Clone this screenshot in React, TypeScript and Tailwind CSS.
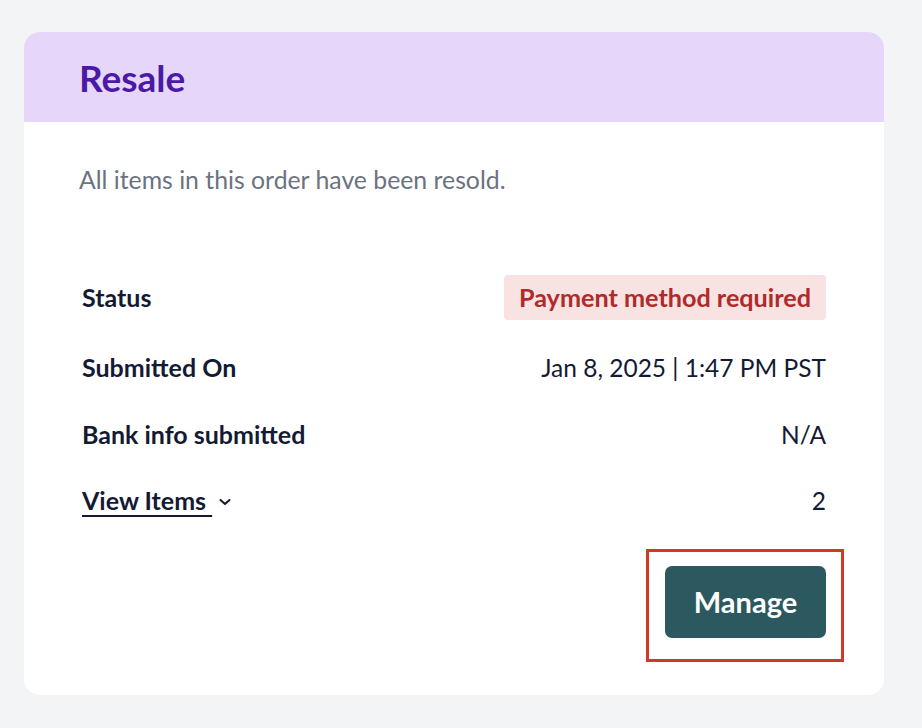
import React from "react";

export default function App() {
  return (
    <div
      className="min-h-[728px] w-full bg-[#f3f4f6] pl-[24px] pr-[38px] pt-[32px] pb-[33px]"
      style={{ fontFamily: "Lato, 'Noto Sans', sans-serif" }}
    >
      <div className="w-[860px] rounded-[16px] bg-white overflow-hidden">
        <div className="h-[90px] bg-[#e6d6fa] pl-[55px] flex items-center">
          <h1 className="text-[37px] font-bold text-[#4a1aa6] leading-none">Resale</h1>
        </div>
        <div className="pl-[55px] pr-[58px] pt-[43px] pb-[57px]">
          <p className="text-[24.8px] leading-[30px] text-[#6b7280]">
            All items in this order have been resold.
          </p>
          <div className="pl-[3px] mt-[80px]">
            <div className="h-[45px] flex items-center justify-between">
              <span className="text-[25px] font-bold text-[#141a33]">Status</span>
              <span className="h-[45px] px-[15px] flex items-center rounded-[4px] bg-[#f8e2e2] text-[25.2px] font-bold text-[#b02a2a]">
                Payment method required
              </span>
            </div>
            <div className="mt-[33px] h-[30px] flex items-center justify-between text-[25px] text-[#141a33]">
              <span className="font-bold">Submitted On</span>
              <span className="text-[24.5px]">Jan 8, 2025 | 1:47 PM PST</span>
            </div>
            <div className="mt-[37px] h-[30px] flex items-center justify-between text-[25px] text-[#141a33]">
              <span className="font-bold">Bank info submitted</span>
              <span className="text-[24.5px]">N/A</span>
            </div>
            <div className="mt-[36px] h-[30px] flex items-center justify-between text-[25px] text-[#141a33]">
              <span className="flex items-center font-bold">
                <span className="underline underline-offset-[5px] decoration-2">View Items&nbsp;</span>
                <svg width="14" height="8" viewBox="0 0 14 8" className="ml-[6px] mt-[2px]" fill="none" stroke="#141a33" strokeWidth="2" strokeLinecap="round" strokeLinejoin="round">
                  <path d="M2.5 2l4.5 4 4.5-4" />
                </svg>
              </span>
              <span className="text-[24.5px]">2</span>
            </div>
            <div className="mt-[50px] flex justify-end">
              <div className="relative">
                <button className="h-[72px] w-[161px] rounded-[7px] bg-[#2c5960] text-white text-[29px] font-bold">
                  Manage
                </button>
                <div className="absolute -left-[19px] -right-[18px] -top-[17px] -bottom-[24px] border-[3px] border-[#d13a20] pointer-events-none" />
              </div>
            </div>
          </div>
        </div>
      </div>
    </div>
  );
}
